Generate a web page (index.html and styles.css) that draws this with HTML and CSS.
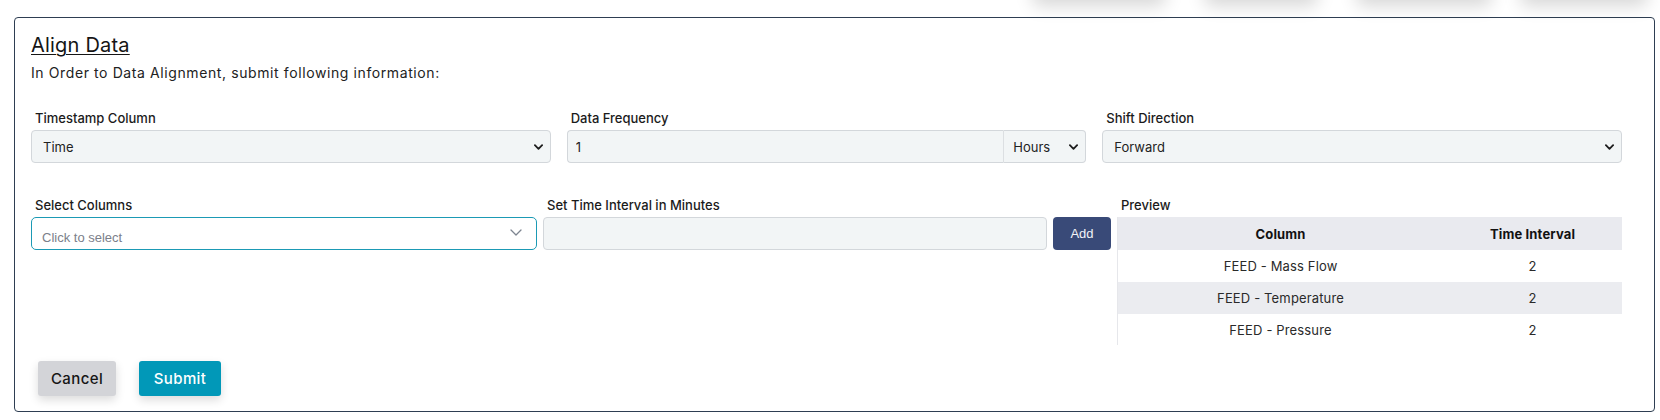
FILE: index.html
```html
<!DOCTYPE html>
<html lang="en">
<head>
<meta charset="utf-8">
<title>Align Data</title>
<link rel="stylesheet" href="styles.css">
</head>
<body>
  <div class="topbar">
    <span class="tab tab-a"></span>
    <span class="tab tab-b"></span>
    <span class="tab tab-c"></span>
    <span class="tab tab-d"></span>
  </div>

  <section class="card">
    <h2 class="title">Align Data</h2>
    <p class="subtitle">In Order to Data Alignment, submit following information:</p>

    <div class="row-one">
      <div class="field">
        <label class="label">Timestamp Column</label>
        <div class="select-wrap">
          <select class="select"><option>Time</option></select>
          <svg class="chev" viewBox="0 0 10 6" width="9" height="6"><path d="M1 1l4 4 4-4" fill="none" stroke="#1c1c1c" stroke-width="2" stroke-linecap="round" stroke-linejoin="round"/></svg>
        </div>
      </div>
      <div class="field">
        <label class="label">Data Frequency</label>
        <div class="input-group">
          <input class="input joined" type="text" value="1">
          <div class="select-wrap unit">
            <select class="select unit-select"><option>Hours</option></select>
            <svg class="chev" viewBox="0 0 10 6" width="9" height="6"><path d="M1 1l4 4 4-4" fill="none" stroke="#1c1c1c" stroke-width="2" stroke-linecap="round" stroke-linejoin="round"/></svg>
          </div>
        </div>
      </div>
      <div class="field">
        <label class="label">Shift Direction</label>
        <div class="select-wrap">
          <select class="select"><option>Forward</option></select>
          <svg class="chev" viewBox="0 0 10 6" width="9" height="6"><path d="M1 1l4 4 4-4" fill="none" stroke="#1c1c1c" stroke-width="2" stroke-linecap="round" stroke-linejoin="round"/></svg>
        </div>
      </div>
    </div>

    <div class="row-two">
      <label class="label">Select Columns</label>
      <label class="label">Set Time Interval in Minutes</label>
      <span></span>
      <label class="label">Preview</label>

      <div class="multiselect">
        <span class="placeholder">Click to select</span>
        <svg class="ms-chev" viewBox="0 0 12 7" width="12" height="7"><path d="M1 1l5 5 5-5" fill="none" stroke="#7d8590" stroke-width="1.3" stroke-linecap="round" stroke-linejoin="round"/></svg>
      </div>
      <input class="input" type="text">
      <button class="btn-add" type="button">Add</button>
      <div class="preview">
        <table class="table">
          <thead>
            <tr><th class="c1">Column</th><th class="c2">Time Interval</th></tr>
          </thead>
          <tbody>
            <tr><td>FEED - Mass Flow</td><td>2</td></tr>
            <tr class="alt"><td>FEED - Temperature</td><td>2</td></tr>
            <tr><td>FEED - Pressure</td><td>2</td></tr>
          </tbody>
        </table>
      </div>
    </div>

    <div class="actions">
      <button class="btn btn-cancel" type="button">Cancel</button>
      <button class="btn btn-submit" type="button">Submit</button>
    </div>
  </section>
</body>
</html>
```

FILE: styles.css
```css
* { box-sizing: border-box; }

html, body { background: #ffffff; }

body {
  margin: 0;
  padding: 17px 5px 0 14px;
  font-family: "Inter", "Liberation Sans", sans-serif;
  color: #1e1e1e;
  overflow: hidden;
}

.topbar {
  display: flex;
  justify-content: flex-end;
  height: 0;
  position: relative;
  z-index: 2;
  padding-right: 8px;
}

.tab {
  display: block;
  height: 40px;
  margin-top: -57px;
  background: #ffffff;
  box-shadow: 0 6px 18px rgba(0, 0, 0, 0.16);
  border-radius: 4px;
}
.tab-a { width: 132px; margin-right: 40px; }
.tab-b { width: 112px; margin-right: 40px; }
.tab-c { width: 134px; margin-right: 30px; }
.tab-d { width: 126px; }

.card {
  border: 1px solid #2e3e52;
  border-radius: 4px;
  padding: 15px 32px 15px 16px;
  background: #ffffff;
}

.title {
  margin: 0;
  font-size: 20px;
  line-height: 24px;
  font-weight: 400;
  letter-spacing: 0.2px;
  color: #151515;
  text-decoration: underline;
  text-underline-offset: 2px;
  text-decoration-thickness: 1px;
}

.subtitle {
  margin: 6px 0 0;
  font-size: 14px;
  line-height: 20px;
  letter-spacing: 0.6px;
  color: #222;
}

.label {
  display: block;
  padding-left: 4px;
  font-size: 13px;
  line-height: 16px;
  font-weight: 500;
  color: #1b1b1b;
  margin-bottom: 4px;
}

.row-one {
  margin-top: 27px;
  display: grid;
  grid-template-columns: repeat(3, 1fr);
  column-gap: 16px;
}

.select-wrap {
  position: relative;
}

.select {
  appearance: none;
  -webkit-appearance: none;
  width: 100%;
  height: 33px;
  padding: 0 28px 0 11px;
  font-family: "Inter", "Liberation Sans", sans-serif;
  font-size: 13px;
  color: #222;
  background: #f2f5f6;
  border: 1px solid #d3d7db;
  border-radius: 4px;
  outline: none;
}

.chev {
  position: absolute;
  right: 8px;
  top: 14px;
  pointer-events: none;
}

.input-group {
  display: flex;
}

.input {
  height: 33px;
  width: 100%;
  padding: 0 8px;
  font-family: "Inter", "Liberation Sans", sans-serif;
  font-size: 13px;
  color: #222;
  background: #f2f5f6;
  border: 1px solid #d3d7db;
  border-radius: 4px;
  outline: none;
}

.input.joined {
  flex: 1;
  border-radius: 4px 0 0 4px;
  border-right: 1px solid #dcdfe2;
}

.unit {
  width: 82px;
  flex: none;
}

.unit-select {
  border-left: none;
  border-radius: 0 4px 4px 0;
  padding-left: 9px;
}

.row-two {
  margin-top: 34px;
  display: grid;
  grid-template-columns: 506px 504px 58px 505px;
  grid-template-rows: auto auto;
  column-gap: 6px;
  align-items: start;
}

.multiselect {
  height: 33px;
  border: 1px solid #1b9ab5;
  border-radius: 5px;
  background: #ffffff;
  display: flex;
  align-items: center;
  justify-content: space-between;
  padding: 0 14px 0 10px;
}

.placeholder {
  font-family: "Liberation Sans", Arial, sans-serif;
  font-size: 13px;
  color: #7b808a;
  margin-top: 7px;
}

.ms-chev {
  margin-top: -2px;
}

.btn-add {
  height: 33px;
  border: none;
  border-radius: 4px;
  background: #394a78;
  color: #f2f3f7;
  font-family: "Liberation Sans", Arial, sans-serif;
  font-size: 13px;
  padding: 0;
}

.preview {
  height: 128px;
  overflow: hidden;
  border-left: 1px solid #e6e7eb;
}

.table {
  width: 100%;
  border-collapse: collapse;
  font-size: 13px;
  letter-spacing: 0.15px;
  color: #2a2a2a;
}

.table th {
  height: 33px;
  background: #e9eaef;
  font-weight: 700;
  color: #111;
  text-align: center;
  padding: 0;
}

.table .c1 { width: 64.5%; }

.table td {
  height: 32px;
  text-align: center;
  padding: 0;
  background: #ffffff;
}

.table tr.alt td { background: #ebecf0; }

.actions {
  margin-top: 16px;
  display: flex;
  gap: 23px;
  padding-left: 7px;
}

.btn {
  height: 35px;
  border: none;
  border-radius: 3px;
  font-family: "Inter", "Liberation Sans", sans-serif;
  font-size: 15px;
  font-weight: 500;
  letter-spacing: 0.4px;
  box-shadow: 0 4px 10px rgba(0, 0, 0, 0.14);
}

.btn-cancel {
  width: 78px;
  background: #d3d4d8;
  color: #161616;
}

.btn-submit {
  width: 82px;
  background: #0198b8;
  color: #ffffff;
}
```
